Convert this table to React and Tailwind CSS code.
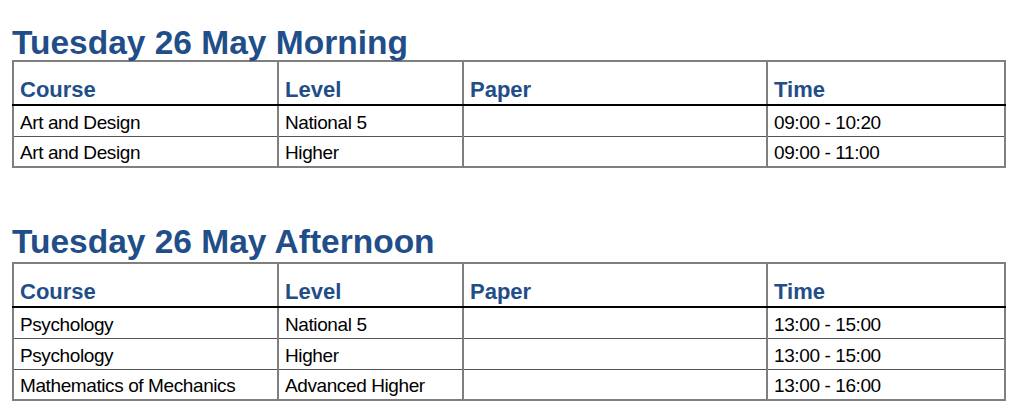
import React from "react";

const sections = [
  {
    title: "Tuesday 26 May Morning",
    rows: [
      ["Art and Design", "National 5", "", "09:00 - 10:20"],
      ["Art and Design", "Higher", "", "09:00 - 11:00"],
    ],
  },
  {
    title: "Tuesday 26 May Afternoon",
    rows: [
      ["Psychology", "National 5", "", "13:00 - 15:00"],
      ["Psychology", "Higher", "", "13:00 - 15:00"],
      ["Mathematics of Mechanics", "Advanced Higher", "", "13:00 - 16:00"],
    ],
  },
];

const headers = ["Course", "Level", "Paper", "Time"];

function Section({ title, rows, first }) {
  return (
    <div className={first ? "pt-[26px]" : "pt-[57px]"}>
      <h2 className={"text-[33.5px] leading-[34px] font-bold text-[#1f4e89] " + (first ? "mb-0" : "mb-[3px]")}>
        {title}
      </h2>
      <table className="table-fixed border-collapse w-[992px] border-2 border-[#7f7f7f]">
        <colgroup>
          <col className="w-[265px]" />
          <col className="w-[185px]" />
          <col className="w-[304px]" />
          <col className="w-[238px]" />
        </colgroup>
        <thead>
          <tr>
            {headers.map((h) => (
              <th
                key={h}
                className="h-[44px] align-bottom text-left pl-[6px] pr-[6px] pb-[2px] text-[22px] leading-[24px] font-bold text-[#1f4e89] border-x-2 border-x-[#7f7f7f] border-b-2 border-b-black"
              >
                {h}
              </th>
            ))}
          </tr>
        </thead>
        <tbody>
          {rows.map((r, i) => (
            <tr key={i}>
              {r.map((c, j) => (
                <td
                  key={j}
                  className="h-[31px] align-bottom pl-[6px] pr-[6px] pb-[3px] text-[19px] leading-[21px] tracking-[-0.4px] text-black border-x-2 border-x-[#7f7f7f] border-b border-b-[#555555] whitespace-nowrap"
                >
                  {c}
                </td>
              ))}
            </tr>
          ))}
        </tbody>
      </table>
    </div>
  );
}

export default function App() {
  return (
    <div className="w-[1024px] h-[417px] bg-white pl-[12px] overflow-hidden" style={{ fontFamily: '"Liberation Sans", Arial, sans-serif' }}>
      {sections.map((s, i) => (
        <Section key={i} {...s} first={i === 0} />
      ))}
    </div>
  );
}
